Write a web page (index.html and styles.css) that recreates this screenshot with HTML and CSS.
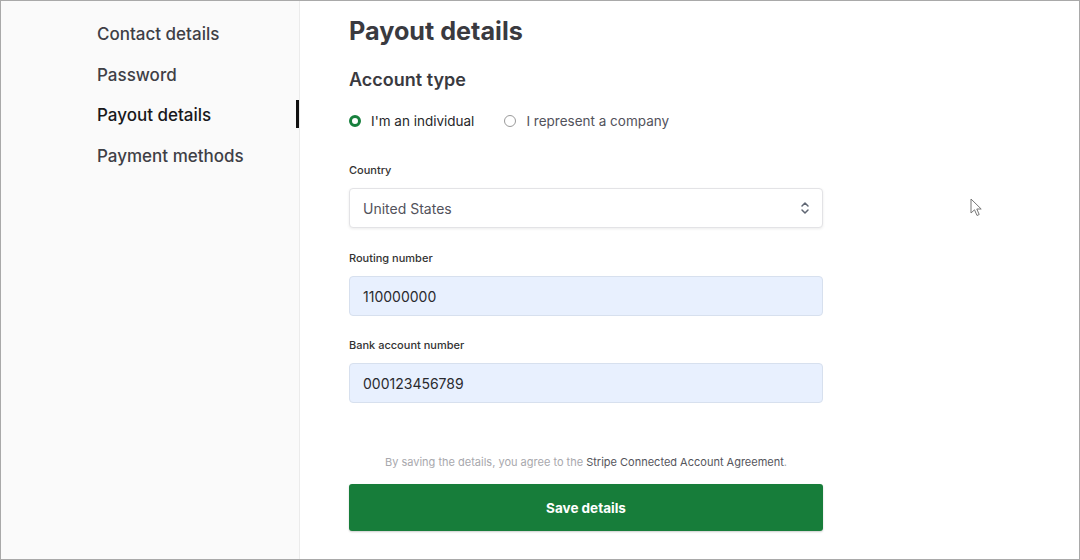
FILE: index.html
```html
<!DOCTYPE html>
<html lang="en">
<head>
<meta charset="utf-8">
<title>Payout details</title>
<link rel="stylesheet" href="styles.css">
</head>
<body>
<div class="frame">
  <aside class="sidebar">
    <nav class="nav">
      <a class="nav-item">Contact details</a>
      <a class="nav-item">Password</a>
      <a class="nav-item active">Payout details</a>
      <a class="nav-item">Payment methods</a>
    </nav>
  </aside>
  <main class="main">
    <h1 class="title">Payout details</h1>
    <h2 class="subtitle">Account type</h2>
    <div class="radios">
      <label class="radio"><span class="dot checked"></span>I'm an individual</label>
      <label class="radio"><span class="dot"></span>I represent a company</label>
    </div>
    <div class="field field-country">
      <div class="label">Country</div>
      <div class="select">
        <span>United States</span>
        <svg class="chev" width="10" height="16" viewBox="0 0 10 16"><path d="M2 6 L5 3 L8 6 M2 10 L5 13 L8 10" fill="none" stroke="#5f6673" stroke-width="1.5" stroke-linecap="round" stroke-linejoin="round"/></svg>
      </div>
    </div>
    <div class="field field-routing">
      <div class="label">Routing number</div>
      <div class="input">110000000</div>
    </div>
    <div class="field">
      <div class="label">Bank account number</div>
      <div class="input">000123456789</div>
    </div>
    <p class="terms">By saving the details, you agree to the <a class="terms-link">Stripe Connected Account Agreement</a>.</p>
    <button class="save">Save details</button>
  </main>
  <svg class="cursor" width="14" height="20" viewBox="0 0 14 20"><path d="M1 1 L1 15 L4.5 11.8 L7 17.5 L9.2 16.5 L6.8 11 L11.2 11 Z" fill="#fff" stroke="#777" stroke-width="1" stroke-linejoin="round"/></svg>
</div>
</body>
</html>
```
FILE: styles.css
```css
html, body {
  margin: 0;
  padding: 0;
  background: #fff;
}
body {
  font-family: Inter, "Noto Sans", "Liberation Sans", sans-serif;
  color: #333;
}
.frame {
  position: relative;
  width: 1080px;
  height: 560px;
  box-sizing: border-box;
  border: 1px solid #a9a9a9;
  display: flex;
  overflow: hidden;
}
.sidebar {
  width: 299px;
  flex: none;
  box-sizing: border-box;
  background: #fafafa;
  border-right: 1px solid #ebebeb;
  padding-top: 19px;
}
.nav {
  display: flex;
  flex-direction: column;
  gap: 12.67px;
}
.nav-item {
  position: relative;
  display: block;
  height: 28px;
  line-height: 28px;
  padding-left: 96px;
  font-size: 17px;
  font-weight: 500;
  color: #3f3f46;
}
.nav-item.active {
  color: #18181b;
}
.nav-item.active::after {
  content: "";
  position: absolute;
  right: 0;
  top: -1px;
  width: 3px;
  height: 28px;
  background: #111;
}
.main {
  width: 474px;
  padding: 14px 0 0 49px;
}
.title {
  margin: 0;
  font-size: 25.2px;
  line-height: 32px;
  font-weight: 700;
  color: #3a3a3f;
}
.subtitle {
  margin: 21px 0 0;
  font-size: 18px;
  line-height: 24px;
  font-weight: 600;
  color: #3a3a3f;
}
.radios {
  margin-top: 19px;
  display: flex;
  gap: 30px;
  height: 20px;
  align-items: center;
}
.radio {
  display: flex;
  align-items: center;
  font-size: 13.5px;
  color: #27272a;
}
.radio + .radio {
  color: #52525b;
}
.dot {
  width: 12px;
  height: 12px;
  box-sizing: border-box;
  border-radius: 50%;
  border: 1px solid #9a9a9a;
  margin-right: 10px;
  background: #fff;
}
.dot.checked {
  border: 3.5px solid #17803d;
}
.field {
  margin-top: 21px;
}
.field-country {
  margin-top: 31px;
}
.field-routing {
  margin-top: 22px;
}
.label {
  font-size: 11px;
  line-height: 16px;
  font-weight: 500;
  color: #333;
  margin-bottom: 10px;
}
.select, .input {
  height: 40px;
  box-sizing: border-box;
  border-radius: 4px;
  padding: 0 13px;
  display: flex;
  align-items: center;
  font-size: 14px;
}
.select {
  justify-content: space-between;
  background: #fff;
  border: 1px solid #e3e3e6;
  box-shadow: 0 1px 3px rgba(0,0,0,0.08);
  color: #52525b;
}
.chev {
  margin-right: -1px;
}
.input {
  background: #e8f0fe;
  border: 1px solid #d7e0ee;
  color: #2a2a2e;
}
.terms {
  margin: 51px 0 0;
  text-align: center;
  font-size: 11px;
  line-height: 16px;
  color: #a8a8ad;
}
.terms-link {
  color: #55555c;
}
.save {
  display: block;
  width: 100%;
  height: 47px;
  margin-top: 14px;
  border: none;
  border-radius: 3px;
  background: #177d3a;
  color: #fff;
  font-family: inherit;
  font-size: 13.5px;
  font-weight: 700;
  box-shadow: 0 1px 2px rgba(0,0,0,0.2);
}
.cursor {
  position: absolute;
  left: 969px;
  top: 197px;
}
```
